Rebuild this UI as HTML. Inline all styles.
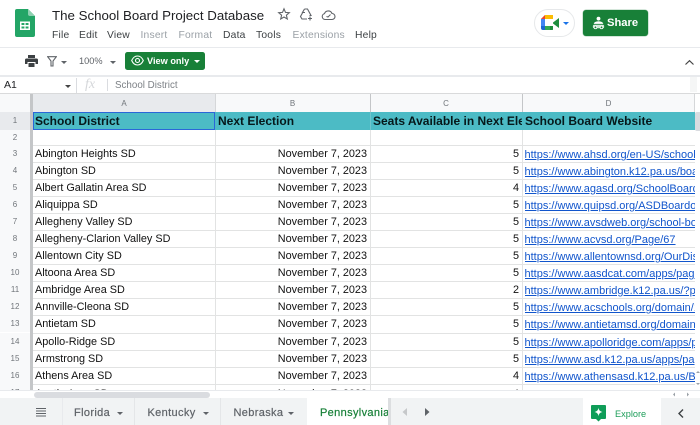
<!DOCTYPE html>
<html><head><meta charset="utf-8">
<style>
html,body{margin:0;padding:0;background:#fff}
#p{position:relative;width:700px;height:425px;overflow:hidden;background:#fff;font-family:"Liberation Sans",Arial,sans-serif;color:#000;filter:blur(.3px)}
#p div,#p svg{position:absolute}
.t{white-space:nowrap}
.m{top:30px;font-size:10.3px;line-height:12px;color:#3c4043;letter-spacing:.2px}
.g{color:#9aa0a6}
.rh{left:0;width:30px;text-align:center;font-size:8px;color:#70757a;line-height:17px;background:#f8f9fa;height:17px}
.ch{top:94px;height:18px;line-height:19px;text-align:center;font-size:8px;color:#70757a}
.hl{left:33px;width:662px;height:1px;background:#e2e3e3}
.vl{top:130px;height:260px;width:1px;background:#e2e3e3}
.c{font-size:10.85px;line-height:19px;height:17px;white-space:nowrap;overflow:hidden;color:#111}
.A{left:35px;width:178px}
.B{left:215px;width:152px;text-align:right}
.C{left:370px;width:149px;text-align:right}
.D{left:524.5px;width:170px;color:#1155cc;text-decoration:underline;font-size:11px}
.h{top:112px;height:18px;line-height:18px;font-weight:bold;font-size:12px;white-space:nowrap;overflow:hidden;color:#06181a}
.tab{top:398px;height:27px;line-height:30px;font-size:11px;color:#5f6368;letter-spacing:.35px;text-align:left;-webkit-text-stroke:.2px currentColor}
.arr{width:0;height:0;border-left:3px solid transparent;border-right:3px solid transparent;border-top:3px solid #5f6368}
</style></head><body><div id="p">

<!-- logo -->
<svg style="left:15px;top:9px" width="20" height="28" viewBox="0 0 20 28"><path d="M2 0H13L20 7V26a2 2 0 0 1-2 2H2a2 2 0 0 1-2-2V2a2 2 0 0 1 2-2z" fill="#23a566"/><path d="M13 0L20 7H15a2 2 0 0 1-2-2z" fill="#8ed1b1"/><path d="M5 12.5H15V21H5z" fill="#fff"/><path d="M6.500 14H9.400V16H6.500zM10.600 14H13.500V16H10.600zM6.500 17.500H9.400V19.500H6.500zM10.600 17.500H13.500V19.500H10.600z" fill="#23a566"/></svg>

<div class="t" style="left:52px;top:7px;font-size:13.3px;line-height:17px;color:#202124">The School Board Project Database</div>
<svg style="left:277px;top:7px" width="14" height="14" viewBox="0 0 14 14"><path d="M7 1.800L8.500 5.400 12.300 5.700 9.400 8.200 10.300 12 7 10 3.700 12 4.600 8.200 1.700 5.700 5.500 5.400z" fill="none" stroke="#5f6368" stroke-width="1.100"/></svg>
<svg style="left:299px;top:7px" width="15" height="15" viewBox="0 0 15 15"><path d="M5.500 2H8.500L12 8.500 10.500 8.500M4 5L1.500 9.500 3 12H8M5.500 2L3.500 5.500 6 5.500" fill="none" stroke="#5f6368" stroke-width="1.100"/><path d="M11 9.500V13.500M9 11.500H13" stroke="#5f6368" stroke-width="1.100"/></svg>
<svg style="left:321px;top:9px" width="15" height="12" viewBox="0 0 15 12"><path d="M4 10.500A3 3 0 0 1 3.500 4.600 4 4 0 0 1 11 4.500 3 3 0 0 1 11 10.500z" fill="none" stroke="#5f6368" stroke-width="1.100"/><path d="M5.500 7.500L7 8 9.500 5.500" fill="none" stroke="#5f6368"/></svg>

<div class="t m" style="left:52px">File</div>
<div class="t m" style="left:79px">Edit</div>
<div class="t m" style="left:107px">View</div>
<div class="t m g" style="left:140.5px">Insert</div>
<div class="t m g" style="left:178.5px">Format</div>
<div class="t m" style="left:223px">Data</div>
<div class="t m" style="left:256px">Tools</div>
<div class="t m g" style="left:292.5px">Extensions</div>
<div class="t m" style="left:355px">Help</div>

<!-- meet -->
<div style="left:534px;top:9px;width:39px;height:26px;border:1px solid #e6e8ea;border-radius:14px;background:#fff"></div>
<svg style="left:541px;top:15px" width="19" height="16" viewBox="0 0 19 16"><path d="M4 0H12V4H4V8H0V4z" fill="#fbbc04"/><path d="M4 0V4H0z" fill="#ea4335"/><path d="M0 4H4V11H0z" fill="#4285f4"/><path d="M0 11H4V15H2a2 2 0 0 1-2-2z" fill="#1967d2"/><path d="M4 11H12V15H4z" fill="#34a853"/><path d="M12 4V2a2 2 0 0 0-2-2H9V4z" fill="#fbbc04"/><path d="M12 4V7.500L18 3V13L12 8.500V13a2 2 0 0 1-2 2H9V11H12V7.500z" fill="#1e8e3e"/></svg>
<div class="arr" style="left:563px;top:22px;border-top-color:#1a73e8"></div>

<!-- share -->
<div style="left:583px;top:10px;width:65px;height:26px;background:#188038;border-radius:3px;box-shadow:0 0 0 .5px #a8cdb4"></div>
<svg style="left:592px;top:16px" width="13" height="14" viewBox="0 0 15 16"><circle cx="7.500" cy="3" r="2.200" fill="#fff"/><path d="M2 9a5.500 3 0 0 1 11 0z" fill="#fff"/><rect x="1" y="10" width="13" height="4" rx="1.500" fill="#cfe6d6"/><circle cx="4" cy="13" r="1.600" fill="#188038" stroke="#fff"/><circle cx="11" cy="13" r="1.600" fill="#188038" stroke="#fff"/></svg>
<div class="t" style="left:607px;top:15px;color:#fff;font-weight:bold;font-size:11.2px;line-height:17px">Share</div>

<div style="left:0;top:47px;width:700px;height:1px;background:#e8eaed"></div>

<!-- toolbar -->
<svg style="left:25px;top:55px" width="13" height="12" viewBox="0 0 13 12"><path d="M3 0H10V3H3zM1.500 3.500H11.500A1.500 1.500 0 0 1 13 5V9H10.500V7H2.500V9H0V5A1.500 1.500 0 0 1 1.500 3.500zM3.500 8H9.500V12H3.500z" fill="#3c4043"/></svg>
<svg style="left:47px;top:56px" width="10" height="11" viewBox="0 0 10 11"><path d="M.7 .7H9.300L6 5V10H4V5z" fill="none" stroke="#5f6368" stroke-width="1.100"/></svg>
<div class="arr" style="left:61px;top:61px"></div>
<div class="t" style="left:79px;top:55px;font-size:9.2px;line-height:13px;color:#5f6368">100%</div>
<div class="arr" style="left:110px;top:61px"></div>

<div style="left:125px;top:52px;width:80px;height:18px;background:#188038;border-radius:2.5px"></div>
<svg style="left:131px;top:55px" width="13" height="11" viewBox="0 0 13 11"><path d="M.7 5.500C2 2.600 4 1 6.500 1S11 2.600 12.300 5.500C11 8.400 9 10 6.500 10S2 8.400 .7 5.500z" fill="none" stroke="#fff" stroke-width="1.100"/><circle cx="6.500" cy="5.500" r="2" fill="none" stroke="#fff" stroke-width="1.100"/></svg>
<div class="t" style="left:147px;top:55px;color:#fff;font-weight:bold;font-size:9.2px;line-height:13px">View only</div>
<div class="arr" style="left:194px;top:60px;border-top-color:#fff"></div>

<svg style="left:684px;top:59px" width="11" height="7" viewBox="0 0 11 7"><path d="M1.500 5.500L5.500 1.700 9.500 5.500" fill="none" stroke="#444" stroke-width="1.200"/></svg>

<div style="left:0;top:75px;width:700px;height:1.5px;background:#e8eaed"></div>

<!-- formula bar -->
<div class="t" style="left:4px;top:79px;font-size:10.5px;line-height:13px;color:#202124">A1</div>
<div class="arr" style="left:65px;top:85px;border-top-color:#444"></div>
<div style="left:76px;top:78px;width:1px;height:15px;background:#dadce0"></div>
<div class="t" style="left:85px;top:77px;font-family:'Liberation Serif',serif;font-style:italic;font-size:14px;line-height:16px;color:#d5d7da">fx</div>
<div style="left:107px;top:79px;width:1px;height:12px;background:#dadce0"></div>
<div class="t" style="left:115px;top:79px;font-size:9.8px;line-height:13px;color:#7d8186">School District</div>
<div style="left:690px;top:77px;width:7px;height:15px;background:#f5f6f6"></div>
<div style="left:0;top:93px;width:700px;height:1.5px;background:#d9dadb"></div>

<!-- column headers -->
<div style="left:0;top:94px;width:33px;height:18px;background:#f8f9fa"></div>
<div style="left:33px;top:94px;width:182px;height:18px;background:#e8eaed"></div>
<div style="left:215px;top:94px;width:480px;height:18px;background:#f8f9fa"></div>
<div class="ch" style="left:33px;width:182px">A</div>
<div class="ch" style="left:215px;width:155px">B</div>
<div class="ch" style="left:370px;width:152px">C</div>
<div class="ch" style="left:522px;width:173px">D</div>
<div style="left:30px;top:94px;width:3px;height:296px;background:#c4c6c8"></div>
<div style="left:215px;top:94px;width:1px;height:18px;background:#d5d7d9"></div>
<div style="left:370px;top:94px;width:1px;height:18px;background:#c4c6c8"></div>
<div style="left:522px;top:94px;width:1px;height:18px;background:#c4c6c8"></div>
<div style="left:694px;top:94px;width:1px;height:18px;background:#d5d7d9"></div>

<!-- row numbers -->
<div class="rh" style="top:112px;height:18px;line-height:18px;background:#e8eaed">1</div>
<div class="rh" style="top:130px;height:15px;line-height:15px">2</div>
<div class="rh" style="top:145px">3</div>
<div class="rh" style="top:162px">4</div>
<div class="rh" style="top:179px">5</div>
<div class="rh" style="top:196px">6</div>
<div class="rh" style="top:213px">7</div>
<div class="rh" style="top:230px">8</div>
<div class="rh" style="top:247px">9</div>
<div class="rh" style="top:264px">10</div>
<div class="rh" style="top:281px">11</div>
<div class="rh" style="top:298px">12</div>
<div class="rh" style="top:315px">13</div>
<div class="rh" style="top:333px">14</div>
<div class="rh" style="top:350px">15</div>
<div class="rh" style="top:367px">16</div>
<div class="rh" style="top:384px;height:6px;overflow:hidden">17</div>

<!-- gridlines -->
<div class="vl" style="left:215px"></div>
<div class="vl" style="left:370px"></div>
<div class="vl" style="left:522px"></div>
<div class="hl" style="top:145px"></div>
<div class="hl" style="top:162px"></div>
<div class="hl" style="top:179px"></div>
<div class="hl" style="top:196px"></div>
<div class="hl" style="top:213px"></div>
<div class="hl" style="top:230px"></div>
<div class="hl" style="top:247px"></div>
<div class="hl" style="top:264px"></div>
<div class="hl" style="top:281px"></div>
<div class="hl" style="top:298px"></div>
<div class="hl" style="top:315px"></div>
<div class="hl" style="top:333px"></div>
<div class="hl" style="top:350px"></div>
<div class="hl" style="top:367px"></div>
<div class="hl" style="top:384px"></div>

<!-- header row -->
<div style="left:33px;top:112px;width:662px;height:18px;background:#4cbbc5"></div>
<div style="left:370px;top:112px;width:1px;height:18px;background:#6fc6ce"></div>
<div style="left:33px;top:112px;width:182px;height:18px;box-sizing:border-box;border:1.5px solid #2a67d8"></div>
<div class="h" style="left:35px;width:178px">School District</div>
<div class="h" style="left:218px;width:150px">Next Election</div>
<div class="h" style="left:373px;width:149px">Seats Available in Next Election</div>
<div class="h" style="left:525px;width:168px">School Board Website</div>

<!-- data -->
<div class="c A" style="top:145px">Abington Heights SD</div><div class="c B" style="top:145px">November 7, 2023</div><div class="c C" style="top:145px">5</div><div class="c D" style="top:146px">https://www.ahsd.org/en-US/school-board</div>
<div class="c A" style="top:162px">Abington SD</div><div class="c B" style="top:162px">November 7, 2023</div><div class="c C" style="top:162px">5</div><div class="c D" style="top:163px">https://www.abington.k12.pa.us/board</div>
<div class="c A" style="top:179px">Albert Gallatin Area SD</div><div class="c B" style="top:179px">November 7, 2023</div><div class="c C" style="top:179px">4</div><div class="c D" style="top:180px">https://www.agasd.org/SchoolBoard</div>
<div class="c A" style="top:196px">Aliquippa SD</div><div class="c B" style="top:196px">November 7, 2023</div><div class="c C" style="top:196px">5</div><div class="c D" style="top:197px">https://www.quipsd.org/ASDBoardof</div>
<div class="c A" style="top:213px">Allegheny Valley SD</div><div class="c B" style="top:213px">November 7, 2023</div><div class="c C" style="top:213px">5</div><div class="c D" style="top:214px">https://www.avsdweb.org/school-board</div>
<div class="c A" style="top:230px">Allegheny-Clarion Valley SD</div><div class="c B" style="top:230px">November 7, 2023</div><div class="c C" style="top:230px">5</div><div class="c D" style="top:231px">https://www.acvsd.org/Page/67</div>
<div class="c A" style="top:247px">Allentown City SD</div><div class="c B" style="top:247px">November 7, 2023</div><div class="c C" style="top:247px">5</div><div class="c D" style="top:248px">https://www.allentownsd.org/OurDistrict</div>
<div class="c A" style="top:264px">Altoona Area SD</div><div class="c B" style="top:264px">November 7, 2023</div><div class="c C" style="top:264px">5</div><div class="c D" style="top:265px">https://www.aasdcat.com/apps/pages</div>
<div class="c A" style="top:281px">Ambridge Area SD</div><div class="c B" style="top:281px">November 7, 2023</div><div class="c C" style="top:281px">2</div><div class="c D" style="top:282px">https://www.ambridge.k12.pa.us/?page</div>
<div class="c A" style="top:298px">Annville-Cleona SD</div><div class="c B" style="top:298px">November 7, 2023</div><div class="c C" style="top:298px">5</div><div class="c D" style="top:299px">https://www.acschools.org/domain/1</div>
<div class="c A" style="top:315px">Antietam SD</div><div class="c B" style="top:315px">November 7, 2023</div><div class="c C" style="top:315px">5</div><div class="c D" style="top:316px">https://www.antietamsd.org/domain/1</div>
<div class="c A" style="top:333px">Apollo-Ridge SD</div><div class="c B" style="top:333px">November 7, 2023</div><div class="c C" style="top:333px">5</div><div class="c D" style="top:334px">https://www.apolloridge.com/apps/pages</div>
<div class="c A" style="top:350px">Armstrong SD</div><div class="c B" style="top:350px">November 7, 2023</div><div class="c C" style="top:350px">5</div><div class="c D" style="top:351px">https://www.asd.k12.pa.us/apps/pages</div>
<div class="c A" style="top:367px">Athens Area SD</div><div class="c B" style="top:367px">November 7, 2023</div><div class="c C" style="top:367px">4</div><div class="c D" style="top:368px">https://www.athensasd.k12.pa.us/Board</div>
<div style="left:33px;top:384px;width:662px;height:6px;overflow:hidden">
<div class="c" style="left:2px;top:1px">Austin Area SD</div><div class="c" style="left:182px;width:152px;text-align:right;top:1px">November 7, 2023</div><div class="c" style="left:337px;width:149px;text-align:right;top:1px">4</div><div class="c" style="left:491.5px;top:2px;color:#1155cc;text-decoration:underline">https://www.austinarea.org/school-board</div>
</div>

<!-- v scrollbar -->
<div style="left:695px;top:94px;width:5px;height:296px;background:#fff"></div>
<div style="left:695px;top:112px;width:5px;height:19px;background:#dadce0;border-radius:2px 0 0 2px"></div>
<svg style="left:695px;top:369px" width="5" height="20" viewBox="0 0 5 20"><path d="M1 4L3 2 5 4zM1 14L3 16 5 14z" fill="#9aa0a6"/></svg>

<!-- h scrollbar -->
<div style="left:0;top:390px;width:700px;height:8px;background:#fff;border-top:1px solid #e8eaed;box-sizing:border-box"></div>
<div style="left:34px;top:391.5px;width:176px;height:6.5px;background:#dadce0;border-radius:3.5px"></div>
<svg style="left:670px;top:391px" width="24" height="7" viewBox="0 0 24 7"><path d="M5 1.500V5.500L3 3.500zM17 1.500V5.500L19 3.500z" fill="#9aa0a6"/></svg>

<!-- tabs -->
<div style="left:0;top:398px;width:700px;height:27px;background:#f1f3f4"></div>
<svg style="left:36px;top:408px" width="10" height="9" viewBox="0 0 10 9"><path d="M0 .5H10M0 3H10M0 5.500H10M0 8H10" stroke="#5f6368" stroke-width="1"/></svg>
<div style="left:62px;top:398px;width:1px;height:27px;background:#e8eaed"></div>
<div class="tab t" style="left:74px">Florida</div><div class="arr" style="left:117px;top:412px"></div>
<div style="left:134px;top:398px;width:1px;height:27px;background:#e4e6e8"></div>
<div class="tab t" style="left:147.5px">Kentucky</div><div class="arr" style="left:203px;top:412px"></div>
<div style="left:220px;top:398px;width:1px;height:27px;background:#e4e6e8"></div>
<div class="tab t" style="left:233.5px">Nebraska</div><div class="arr" style="left:288px;top:412px"></div>
<div style="left:307px;top:398px;width:83px;height:27px;background:#fff"></div>
<div class="tab t" style="left:320px;color:#188038">Pennsylvania</div>
<div style="left:388px;top:398px;width:2.5px;height:27px;background:#dcdee0"></div>
<svg style="left:401px;top:407px" width="8" height="10" viewBox="0 0 8 10"><path d="M6 1V9L1.500 5z" fill="#c6c8ca"/></svg>
<svg style="left:423px;top:407px" width="8" height="10" viewBox="0 0 8 10"><path d="M2 1V9L6.500 5z" fill="#5f6368"/></svg>

<!-- explore -->
<div style="left:582.5px;top:398px;width:78px;height:27px;background:#fff"></div>
<svg style="left:591px;top:405px" width="15" height="17" viewBox="0 0 15 17"><path d="M1 0H14a1 1 0 0 1 1 1V13a1 1 0 0 1-1 1H10L7.500 16.500 5 14H1a1 1 0 0 1-1-1V1a1 1 0 0 1 1-1z" fill="#0f9d58"/><path d="M7.500 2.800C7.900 5.300 9 6.500 11.500 7 9 7.500 7.900 8.700 7.500 11.200 7.100 8.700 6 7.500 3.500 7 6 6.500 7.100 5.300 7.500 2.800z" fill="#fff"/></svg>
<div class="t" style="left:615px;top:408px;font-size:9.2px;line-height:13px;color:#1e9e5a">Explore</div>
<svg style="left:677px;top:408px" width="8" height="11" viewBox="0 0 8 11"><path d="M6 1.500L2 5.500 6 9.500" fill="none" stroke="#3c4043" stroke-width="1.400"/></svg>

</div></body></html>
